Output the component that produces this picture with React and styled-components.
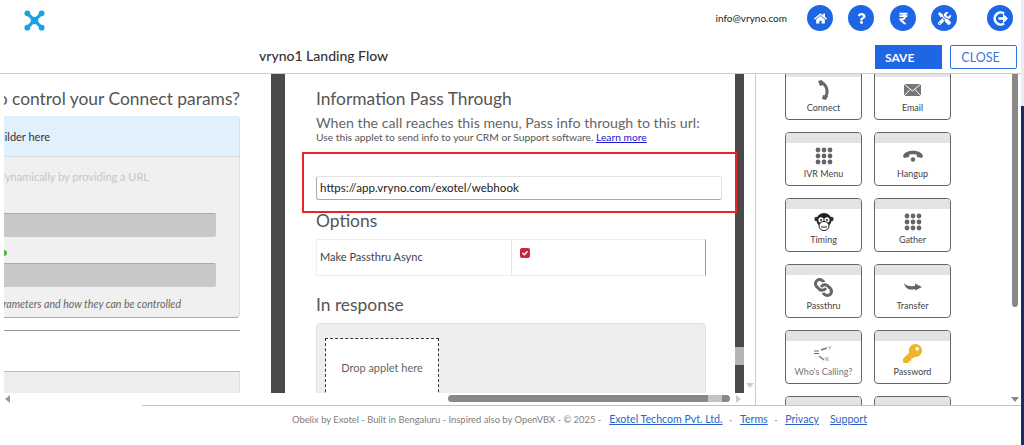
import React from "react";
import styled, { createGlobalStyle } from "styled-components";
import {
  FaHome,
  FaQuestion,
  FaRupeeSign,
  FaTools,
  FaLink,
  FaKey,
} from "react-icons/fa";

const GlobalStyle = createGlobalStyle`
  html, body {
    margin: 0;
    padding: 0;
    background: #fff;
    overflow: hidden;
  }
  * { box-sizing: border-box; }
`;

const FONT = `"Lato", "Liberation Sans", sans-serif`;

const Shell = styled.div`
  display: flex;
  width: 1024px;
  height: 445px;
  overflow: hidden;
  font-family: ${FONT};
  color: #444;
`;

const Page = styled.div`
  width: 1021px;
  display: flex;
  flex-direction: column;
`;

const EdgeStrip = styled.div`
  width: 3px;
  background: linear-gradient(to bottom, #e8ecfb 106px, #1c2a66 106px);
`;

const Header = styled.header`
  height: 74px;
  flex: none;
  border-bottom: 1px solid #cbcbcb;
`;

const TopRow = styled.div`
  height: 40px;
  display: flex;
  align-items: flex-start;
  padding: 5px 8px 0 24px;
`;

const Logo = styled.svg`
  width: 21px;
  height: 21px;
  margin-top: 5px;
`;

const Email = styled.span`
  margin-left: auto;
  margin-right: 19px;
  margin-top: 6px;
  font-size: 10px;
  line-height: 14px;
  color: #222;
`;

const RoundButton = styled.div`
  width: 26px;
  height: 26px;
  border-radius: 50%;
  background: #1f66e5;
  color: #fff;
  display: flex;
  align-items: center;
  justify-content: center;
  font-size: 13px;
  margin-left: ${(p) => p.$gap || 15}px;
`;

const ActionRow = styled.div`
  height: 33px;
  display: flex;
  align-items: flex-start;
  padding: 5px 4px 0 259px;
`;

const FlowTitle = styled.h1`
  margin: 0 auto 0 0;
  font-size: 14px;
  line-height: 22px;
  font-weight: 500;
  color: #333;
`;

const SaveButton = styled.button`
  width: 67px;
  height: 24px;
  border: 0;
  padding: 0 0 0 10px;
  text-align: left;
  background: #1f66e5;
  color: #fff;
  font: 700 12px ${FONT};
`;

const CloseButton = styled.button`
  width: 67px;
  height: 24px;
  margin-left: 8px;
  padding: 0 6px 0 0;
  border: 1px solid #2f72e0;
  border-radius: 2px;
  background: #fff;
  color: #3a78dd;
  font: 400 12.5px ${FONT};
`;

const Main = styled.main`
  height: 331px;
  flex: none;
  display: flex;
`;

const ScrollPane = styled.div`
  width: 756px;
  flex: none;
  display: flex;
  flex-direction: column;
  border-right: 1px solid #ccc;
`;

const PaneRow = styled.div`
  height: 319px;
  flex: none;
  display: flex;
  overflow: hidden;
`;

const LeftClip = styled.section`
  width: 236px;
  margin-left: 4px;
  flex: none;
  display: flex;
  justify-content: flex-end;
  overflow: hidden;
`;

const LeftInner = styled.div`
  width: 420px;
  flex: none;
`;

const Heading = styled.h2`
  margin: ${(p) => p.$mt || 0}px 0 0;
  font-size: 17.4px;
  line-height: 24px;
  font-weight: 400;
  color: #555;
  text-align: ${(p) => (p.$right ? "right" : "left")};
  white-space: nowrap;
  padding-top: ${(p) => p.$top || 0}px;
`;

const ConfigBox = styled.div`
  margin-top: 5px;
  height: 202px;
  background: #f0f0f0;
  border-radius: 4px;
  border-right: 1px solid #ddd;
  border-bottom: 1px solid #aaa;
`;

const ConfigHead = styled.div`
  height: 41px;
  display: flex;
  align-items: center;
  justify-content: flex-end;
  padding-right: 189px;
  background: #e0f1fd;
  border-bottom: 1px solid #d5dde2;
  font-size: 11px;
  color: #333;
`;

const Hint = styled.div`
  margin-top: 13px;
  height: 14px;
  padding-right: 90px;
  text-align: right;
  font-size: 11px;
  line-height: 14px;
  color: #c6c6c6;
`;

const GreyField = styled.div`
  height: 24px;
  margin-right: 23px;
  border-radius: 2px;
  background: #c8c8c8;
  border-top: 1px solid #aaa;
  display: flex;
  align-items: center;
  justify-content: flex-end;
  padding-right: 212px;
  font-size: 7px;
  color: #888;
  margin-top: ${(p) => p.$top}px;
`;

const StatusRow = styled.div`
  height: 26px;
  display: flex;
  align-items: center;
  justify-content: flex-end;
  padding: 6px 232px 0 0;
`;

const GreenDot = styled.span`
  width: 6px;
  height: 6px;
  border-radius: 50%;
  background: #59b548;
`;

const ItalicNote = styled.div`
  margin-top: 10px;
  padding-right: 58px;
  text-align: right;
  font-size: 10.6px;
  line-height: 14px;
  font-style: italic;
  color: #666;
`;

const Rule = styled.hr`
  margin: 12px 0 0;
  border: 0;
  border-top: 1px solid #999;
`;

const LowerBox = styled.div`
  margin-top: 40px;
  height: 40px;
  background: #eee;
  border-top: 1px solid #bbb;
  border-right: 1px solid #ddd;
`;

const DarkRail = styled.div`
  flex: none;
  width: ${(p) => p.$w}px;
  margin-left: ${(p) => p.$ml || 0}px;
  background: ${(p) => p.$patch
    ? "linear-gradient(to bottom, #4a4a4a 273px, #b4b4b4 273px, #b4b4b4 291px, #4a4a4a 291px)"
    : "#4a4a4a"};
`;

const Center = styled.section`
  width: 450px;
  flex: none;
  padding-left: 31px;
  background: #fff;
`;

const Lead = styled.p`
  margin: 3px 0 0;
  font-size: 14.2px;
  line-height: 17px;
  color: #666;
`;

const SubLead = styled.p`
  margin: 0;
  font-size: 10.25px;
  line-height: 13px;
  color: #555;
`;

const LearnMore = styled.a`
  color: #1a1ad0;
  text-decoration: underline;
`;

const RedFrame = styled.div`
  width: 435px;
  height: 61px;
  margin: 8px 0 0 -14px;
  padding: 22px 0 0 12px;
  border: 2px solid #e8232c;
  position: relative;
`;

const UrlInput = styled.div`
  width: 406px;
  height: 24px;
  padding-left: 3px;
  border: 1px solid #e2e2e2;
  border-bottom-color: #aaa;
  border-left-color: #aaa;
  border-radius: 3px;
  font-size: 11.6px;
  line-height: 22px;
  color: #222;
`;

const OptionTable = styled.div`
  width: 390px;
  height: 37px;
  margin-top: 6px;
  display: flex;
  border: 1px solid #eee;
  border-right: 1px solid #999;
`;

const OptionLabel = styled.div`
  width: 195px;
  padding-left: 3px;
  border-right: 1px solid #e4e4e4;
  font-size: 11px;
  line-height: 34px;
  color: #444;
`;

const OptionCheck = styled.div`
  padding: 8px 0 0 8px;
`;

const CheckBox = styled.span`
  display: flex;
  align-items: center;
  justify-content: center;
  width: 10px;
  height: 10px;
  border-radius: 2px;
  background: #c8283c;
`;

const ResponseBox = styled.div`
  width: 390px;
  height: 90px;
  margin-top: 6px;
  padding: 14px 0 0 8px;
  background: #eee;
  border: 1px solid #e2e2e2;
  border-radius: 4px;
`;

const DropZone = styled.div`
  width: 114px;
  height: 80px;
  padding-top: 21px;
  background: #fff;
  border: 1px dashed #333;
  text-align: center;
  font-size: 11px;
  line-height: 16px;
  color: #666;
`;

const Gutter = styled.div`
  flex: 1;
  display: flex;
  flex-direction: column;
  justify-content: flex-end;
  align-items: center;
  padding-bottom: 5px;
`;

const Arrow = styled.span`
  width: 0;
  height: 0;
  flex: none;
  border-style: solid;
  border-color: transparent;
  ${(p) => p.$dir === "down" && `border-width: 5px 4px 0; border-top-color: ${p.$color || "#ccc"};`}
  ${(p) => p.$dir === "left" && `border-width: 4px 5px 4px 0; border-right-color: ${p.$color || "#999"};`}
  ${(p) => p.$dir === "right" && `border-width: 4px 0 4px 5px; border-left-color: ${p.$color || "#ccc"};`}
`;

const HScroll = styled.div`
  height: 12px;
  flex: none;
  display: flex;
  align-items: center;
  padding: 0 0 1px 5px;
`;

const HThumb = styled.div`
  width: 282px;
  height: 7px;
  margin-left: 438px;
  margin-right: 6px;
  border-radius: 4px;
  background: linear-gradient(to right, #888 260px, #c4c4c4 260px, #c4c4c4 274px, #888 274px);
`;

const ToolPane = styled.aside`
  flex: 1;
  display: flex;
  overflow: hidden;
`;

const ToolScroll = styled.div`
  width: 255px;
  flex: none;
  padding-left: 29px;
  overflow: hidden;
`;

const ToolGrid = styled.div`
  display: grid;
  grid-template-columns: 77px 77px;
  grid-auto-rows: 54px;
  gap: 12px;
  margin-top: -8px;
`;

const ToolCard = styled.div`
  border: 1px solid #666;
  border-radius: 4px;
  overflow: hidden;
  display: flex;
  flex-direction: column;
  align-items: center;
  background: #fff;
`;

const ToolBand = styled.div`
  width: 100%;
  height: 10px;
  flex: none;
  background: #e3e3e3;
`;

const ToolIcon = styled.div`
  height: 25px;
  display: flex;
  align-items: center;
  justify-content: center;
  color: #666;
  font-size: 17px;
`;

const ToolName = styled.div`
  font-size: 9px;
  line-height: 12px;
  color: ${(p) => (p.$faded ? "#777" : "#444")};
`;

const VScroll = styled.div`
  width: 8px;
  flex: none;
  display: flex;
  flex-direction: column;
  justify-content: space-between;
  align-items: center;
  padding-bottom: 3px;
`;

const VThumb = styled.div`
  width: 6px;
  height: 233px;
  border-radius: 0 0 3px 3px;
  background: #888;
`;

const Footer = styled.footer`
  flex: 1;
  margin-left: 142px;
  padding: 6px 0 0 150px;
  border-top: 1px solid #c4c4c4;
  display: flex;
  align-items: baseline;
  font-size: 9.4px;
  line-height: 14px;
  color: #808080;
  white-space: nowrap;
`;

const FootLink = styled.a`
  font-size: 10.6px;
  color: #2b63c9;
  text-decoration: underline;
  margin-left: ${(p) => p.$gap}px;
`;

const FootDot = styled.span`
  margin-left: 7px;
`;

const PhoneIcon = () => (
  <svg width="14" height="20" viewBox="0 0 14 20">
    <path d="M3 2 C10 4 12 12 8 18" fill="none" stroke="#666" strokeWidth="3" />
    <path d="M1 1 L5 0 L6 5 L3 6 Z M6 15 L11 16 L9 20 L5 19 Z" fill="#666" />
  </svg>
);

const MailIcon = () => (
  <svg width="17" height="12" viewBox="0 0 17 12">
    <rect width="17" height="12" fill="#777" />
    <path d="M0 0 L8.5 7 L17 0 M0 12 L6 5.5 M17 12 L11 5.5" fill="none" stroke="#fff" strokeWidth="1" />
  </svg>
);

const DotsIcon = () => (
  <svg width="18" height="18" viewBox="0 0 18 18" fill="#666">
    {[3, 9, 15].map((y) =>
      [3, 9, 15].map((x) => <circle key={`${x}-${y}`} cx={x} cy={y} r="2.4" />)
    )}
  </svg>
);

const HangupIcon = () => (
  <svg width="20" height="13" viewBox="0 0 20 13" fill="#666">
    <path d="M0 7 C2 0 18 0 20 7 L19 9 L14 8 L13.5 5.5 C11 5 9 5 6.5 5.5 L6 8 L1 9 Z" />
    <circle cx="10" cy="10.5" r="2.2" />
  </svg>
);

const TransferIcon = () => (
  <svg width="18" height="9" viewBox="0 0 18 9" fill="#666">
    <path d="M0 0 C2 3 6 3.5 11 3 L11 0.5 L18 4 L11 7.5 L11 6 C6 7.5 1 6 0 0 Z" />
  </svg>
);

const MonkeyIcon = () => (
  <svg width="20" height="20" viewBox="0 0 20 20">
    <circle cx="2.5" cy="7" r="2.2" fill="#333" />
    <circle cx="17.5" cy="7" r="2.2" fill="#333" />
    <ellipse cx="10" cy="8" rx="7.5" ry="7" fill="#222" />
    <ellipse cx="7" cy="8" rx="2.6" ry="2.8" fill="#fff" />
    <ellipse cx="13" cy="8" rx="2.6" ry="2.8" fill="#fff" />
    <ellipse cx="10" cy="14" rx="5" ry="4.6" fill="#fff" stroke="#222" />
    <circle cx="7" cy="8" r="1" fill="#222" />
    <circle cx="13" cy="8" r="1" fill="#222" />
    <path d="M7 15 H13" stroke="#222" />
  </svg>
);

const WhoIcon = () => (
  <svg width="20" height="16" viewBox="0 0 20 16">
    <path d="M0 5 H5 M0 7.5 H5" stroke="#666" />
    <path d="M7 4 L13 2 M5 10 L10 14" stroke="#777" strokeWidth="1.4" />
    <text x="14" y="4" fontSize="5" fill="#666" fontFamily="Liberation Sans">Y</text>
    <text x="11" y="15" fontSize="5" fill="#666" fontFamily="Liberation Sans">N</text>
  </svg>
);

const LogoutIcon = () => (
  <svg width="17" height="17" viewBox="0 0 17 17" fill="none" stroke="#fff" strokeWidth="2.6">
    <path d="M12 3.5 A6 6 0 1 0 12 13.5" />
    <path d="M6.5 8.5 H14" />
    <path d="M11 4.2 L15.5 8.5 L11 12.8" fill="#fff" strokeWidth="1" />
  </svg>
);

const tools = [
  { name: "Connect", icon: <PhoneIcon /> },
  { name: "Email", icon: <MailIcon /> },
  { name: "IVR Menu", icon: <DotsIcon /> },
  { name: "Hangup", icon: <HangupIcon /> },
  { name: "Timing", icon: <MonkeyIcon /> },
  { name: "Gather", icon: <DotsIcon /> },
  { name: "Passthru", icon: <FaLink style={{ fontSize: 19, transform: "rotate(90deg)" }} /> },
  { name: "Transfer", icon: <TransferIcon /> },
  { name: "Who's Calling?", icon: <WhoIcon />, faded: true },
  { name: "Password", icon: <FaKey style={{ fontSize: 19, color: "#f0b429" }} /> },
  { name: "", icon: null },
  { name: "", icon: null },
];

const App = () => (
  <>
    <GlobalStyle />
    <Shell>
      <Page>
        <Header>
          <TopRow>
            <Logo viewBox="0 0 22 22">
              <path d="M4 4 L18 18 M4 18 L18 4" stroke="#1ea0e0" strokeWidth="3.4" />
              <circle cx="11" cy="11" r="4" fill="#1ea0e0" />
              <circle cx="3.5" cy="3.5" r="3" fill="#1ea0e0" />
              <circle cx="18.5" cy="3.5" r="3" fill="#1ea0e0" />
              <circle cx="3.5" cy="18.5" r="3" fill="#1ea0e0" />
              <circle cx="18.5" cy="18.5" r="3" fill="#1ea0e0" />
            </Logo>
            <Email>info@vryno.com</Email>
            <RoundButton $gap={1}><FaHome /></RoundButton>
            <RoundButton><FaQuestion size={11} /></RoundButton>
            <RoundButton $gap={16}><FaRupeeSign /></RoundButton>
            <RoundButton><FaTools /></RoundButton>
            <RoundButton $gap={30}><LogoutIcon /></RoundButton>
          </TopRow>
          <ActionRow>
            <FlowTitle>vryno1 Landing Flow</FlowTitle>
            <SaveButton>SAVE</SaveButton>
            <CloseButton>CLOSE</CloseButton>
          </ActionRow>
        </Header>

        <Main>
          <ScrollPane>
            <PaneRow>
              <LeftClip>
                <LeftInner>
                  <Heading $top={13} $right>Do you want to control your Connect params?</Heading>
                  <ConfigBox>
                    <ConfigHead>Use the Connect param builder here</ConfigHead>
                    <Hint>Set connect params dynamically by providing a URL</Hint>
                    <GreyField $top={29} />
                    <StatusRow><GreenDot /></StatusRow>
                    <GreyField $top={0}>Value</GreyField>
                    <ItalicNote>Learn more about the parameters and how they can be controlled</ItalicNote>
                  </ConfigBox>
                  <Rule />
                  <LowerBox />
                </LeftInner>
              </LeftClip>
              <DarkRail $w={14} $ml={31} />
              <Center>
                <Heading $top={13}>Information Pass Through</Heading>
                <Lead>When the call reaches this menu, Pass info through to this url:</Lead>
                <SubLead>
                  Use this applet to send info to your CRM or Support software.{" "}
                  <LearnMore href="#">Learn more</LearnMore>
                </SubLead>
                <RedFrame>
                  <UrlInput>https://app.vryno.com/exotel/webhook</UrlInput>
                </RedFrame>
                <Heading $mt={-4}>Options</Heading>
                <OptionTable>
                  <OptionLabel>Make Passthru Async</OptionLabel>
                  <OptionCheck>
                    <CheckBox>
                      <svg width="8" height="8" viewBox="0 0 8 8">
                        <path d="M1.5 4 L3.3 5.8 L6.5 2.2" fill="none" stroke="#fff" strokeWidth="1.4" />
                      </svg>
                    </CheckBox>
                  </OptionCheck>
                </OptionTable>
                <Heading $top={17}>In response</Heading>
                <ResponseBox>
                  <DropZone>Drop applet here</DropZone>
                </ResponseBox>
              </Center>
              <DarkRail $w={9} $patch />
              <Gutter><Arrow $dir="down" /></Gutter>
            </PaneRow>
            <HScroll>
              <Arrow $dir="left" />
              <HThumb />
              <Arrow $dir="right" />
            </HScroll>
          </ScrollPane>

          <ToolPane>
            <ToolScroll>
              <ToolGrid>
                {tools.map((tool, i) => (
                  <ToolCard key={i}>
                    <ToolBand />
                    <ToolIcon>{tool.icon}</ToolIcon>
                    <ToolName $faded={tool.faded}>{tool.name}</ToolName>
                  </ToolCard>
                ))}
              </ToolGrid>
            </ToolScroll>
            <VScroll>
              <VThumb />
              <Arrow $dir="down" $color="#888" />
            </VScroll>
          </ToolPane>
        </Main>

        <Footer>
          Obelix by Exotel - Built in Bengaluru - Inspired also by OpenVBX - © 2025 -
          <FootLink $gap={8} href="#">Exotel Techcom Pvt. Ltd.</FootLink>
          <FootDot>·</FootDot>
          <FootLink $gap={8} href="#">Terms</FootLink>
          <FootDot>·</FootDot>
          <FootLink $gap={8} href="#">Privacy</FootLink>
          <FootLink $gap={11} href="#">Support</FootLink>
        </Footer>
      </Page>
      <EdgeStrip />
    </Shell>
  </>
);

export default App;
